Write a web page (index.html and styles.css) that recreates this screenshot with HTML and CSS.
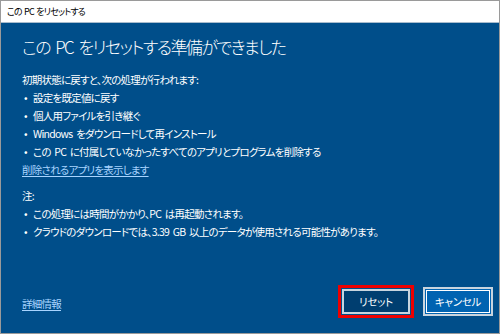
FILE: index.html
```html
<!DOCTYPE html>
<html lang="ja">
  <head>
    <meta charset="UTF-8" />
    <meta name="viewport" content="width=device-width, initial-scale=1.0" />
    <title>この PC をリセットする</title>
    <link rel="stylesheet" href="styles.css">
  </head>
  <body>
    <div class="dialog">
      <div class="title-bar">この PC をリセットする</div>
      <div class="dialog-body">
        <h1>この PC をリセットする準備ができました</h1>
        <div class="section">
          <p>初期状態に戻すと、次の処理が行われます:</p>
          <ul>
            <li>設定を既定値に戻す</li>
            <li>個人用ファイルを引き継ぐ</li>
            <li>Windows をダウンロードして再インストール</li>
            <li>この PC に付属していなかったすべてのアプリとプログラムを削除する</li>
          </ul>
          <a href="#" class="link">削除されるアプリを表示します</a>
        </div>
        <div class="section note">
          <p>注:</p>
          <ul>
            <li>この処理には時間がかかり、PC は再起動されます。</li>
            <li>クラウドのダウンロードでは、3.39 GB 以上のデータが使用される可能性があります。</li>
          </ul>
        </div>
        <div class="footer">
          <a href="#" class="link">詳細情報</a>
          <div class="buttons">
            <span class="highlight"><button class="btn btn-reset">リセット</button></span>
            <button class="btn btn-cancel">キャンセル</button>
          </div>
        </div>
      </div>
    </div>
  </body>
</html>
```

FILE: styles.css
```css
* {
  margin: 0;
  padding: 0;
  box-sizing: border-box;
}

body {
  font-family: 'Noto Sans CJK JP', 'Noto Sans', sans-serif;
  font-feature-settings: 'palt';
  width: 500px;
  height: 334px;
  overflow: hidden;
}

.dialog {
  width: 500px;
  height: 334px;
  border: 1px solid #9a9a9a;
  display: flex;
  flex-direction: column;
  background: #004e8a;
}

.title-bar {
  height: 22px;
  background: #fff;
  color: #000;
  font-size: 9px;
  letter-spacing: -0.8px;
  word-spacing: 1px;
  line-height: 21px;
  padding-left: 6px;
  border-bottom: 1px solid #a9bccd;
}

.dialog-body {
  flex: 1;
  display: flex;
  flex-direction: column;
  padding: 10px 21px 0 21px;
  color: #fff;
  font-size: 10.5px;
  letter-spacing: -0.75px;
  word-spacing: 2px;
  line-height: 18px;
}

h1 {
  font-size: 17px;
  font-weight: 300;
  letter-spacing: -1.55px;
  word-spacing: 3px;
  line-height: 28px;
  margin-bottom: 10px;
}

ul {
  list-style: none;
}

ul li {
  position: relative;
  padding-left: 11px;
}

ul li::before {
  content: '•';
  position: absolute;
  left: 2px;
}

.link {
  color: #a8d4ff;
  text-decoration: underline;
  text-underline-offset: 2px;
}

.note {
  margin-top: 8px;
}

.footer {
  margin-top: auto;
  height: 52px;
  display: flex;
  justify-content: space-between;
  align-items: flex-start;
  padding-top: 4px;
}

.footer .link {
  margin-top: 10px;
}

.buttons {
  display: flex;
  align-items: center;
  gap: 9px;
  margin-right: -15px;
}

.highlight {
  border: 3px solid #ee0000;
  padding: 1px;
  display: flex;
}

.btn {
  font-family: inherit;
  font-feature-settings: 'palt';
  font-size: 10.5px;
  letter-spacing: -0.3px;
  color: #fff;
  width: 68px;
  height: 25px;
  cursor: pointer;
}

.btn-reset {
  background: #003e70;
  border: 2px solid #c8d4de;
}

.btn-cancel {
  background: #0063b1;
  border: 2px solid #c8d4de;
  outline: 1px solid #fff;
  outline-offset: -4px;
  height: 29px;
  width: 70px;
}
```
